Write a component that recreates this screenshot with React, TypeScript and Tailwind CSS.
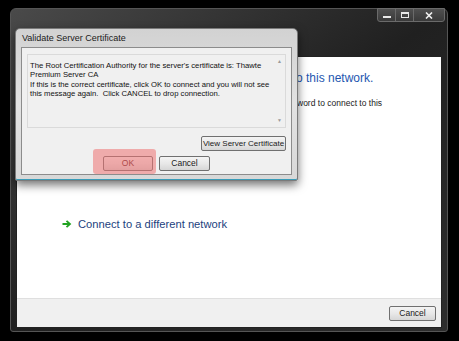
import React from 'react';

const sans = { fontFamily: '"Liberation Sans", "DejaVu Sans", sans-serif' };

function WinButton({ label, className = '' }: { label: string; className?: string }) {
  return (
    <button
      className={`block h-[15px] whitespace-nowrap rounded-[2px] border border-[#707070] bg-gradient-to-b from-[#f4f4f4] via-[#e8e8e8] to-[#d6d6d6] leading-none text-[#1a1a1a] ${className}`}
    >
      {label}
    </button>
  );
}

export default function App() {
  return (
    <div className="relative w-[459px] h-[341px] overflow-hidden bg-black pt-[8px] pl-[10px] pr-[11px] pb-[9px]" style={sans}>
      {/* main wizard window */}
      <div className="relative flex h-full flex-col rounded-t-[6px] rounded-b-[3px] border border-[#555] bg-gradient-to-br from-[#4a4a4a] via-[#202020] to-[#2e2e2e] px-[5px] pt-[47px] pb-[3px]">
        <div className="absolute right-[2px] top-[-1px] flex h-[14px] overflow-hidden rounded-b-[3px] border border-[#6a6a6a] bg-gradient-to-b from-[#505050] to-[#3a3a3a]">
          <div className="flex w-[18px] items-center justify-center border-r border-[#6a6a6a]">
            <div className="mt-[4px] h-[2px] w-[8px] bg-[#e8e8e8]" />
          </div>
          <div className="flex w-[18px] items-center justify-center border-r border-[#6a6a6a]">
            <div className="h-[6px] w-[8px] border border-t-2 border-[#e8e8e8]" />
          </div>
          <div className="flex w-[30px] items-center justify-center">
            <svg width="8" height="7" viewBox="0 0 8 7">
              <path d="M1 0.5 L7 6.5 M7 0.5 L1 6.5" stroke="#f0f0f0" strokeWidth="1.6" />
            </svg>
          </div>
        </div>

        <div className="flex flex-1 flex-col border border-[#222] bg-white">
          <div className="flex-1 pt-[13px]">
            <p className="ml-[279px] whitespace-nowrap text-[12px] leading-[16px] text-[#1e56b0]">o this network.</p>
            <p className="ml-[280px] mt-[11px] whitespace-nowrap text-[8.5px] leading-[12px] text-[#222]">word to connect to this</p>
            <div className="ml-[45px] mt-[107px] flex items-center gap-[6px]">
              <svg width="10" height="8" viewBox="0 0 10 8">
                <path d="M0.5 4 H7.5 M4.5 0.8 L8 4 L4.5 7.2" fill="none" stroke="#21a321" strokeWidth="1.8" />
              </svg>
              <span className="whitespace-nowrap text-[11.2px] leading-[16px] text-[#1d3f7e]">Connect to a different network</span>
            </div>
          </div>
          <div className="flex h-[29px] items-center justify-end border-t border-[#dfdfdf] bg-[#f0f0f0] pr-[5px]">
            <WinButton label="Cancel" className="w-[47px] text-[8.5px]" />
          </div>
        </div>
      </div>

      {/* validate certificate dialog, floating over the window */}
      <div className="absolute left-[15px] top-[28px] flex h-[153px] w-[283px] flex-col rounded-t-[5px] rounded-b-[2px] border border-[#7a7a7a] bg-gradient-to-b from-[#d2d2d2] via-[#e2e2e2] to-[#d8d8d8] px-[5px] pb-[5px] shadow-[0_4px_10px_rgba(0,0,0,0.55),inset_0_-1px_0_#3a9cb8]">
        <div className="flex h-[18px] items-center pl-[1px] pt-[2px] text-[9px] text-[#1a1a1a]">Validate Server Certificate</div>
        <div className="flex flex-1 flex-col border border-[#8c8c8c] bg-[#f0f0f0] px-[5px] pt-[6px]">
          <div className="relative h-[74px] border border-[#dadada] bg-[#f0f0f0] pl-[2px] pt-[6px] pr-[12px] text-[7.7px] leading-[9.3px] text-[#111]">
            <p className="whitespace-nowrap">The Root Certification Authority for the server's certificate is: Thawte</p>
            <p className="whitespace-nowrap">Premium Server CA</p>
            <p className="whitespace-nowrap">If this is the correct certificate, click OK to connect and you will not see</p>
            <p className="whitespace-pre">this message again.  Click CANCEL to drop connection.</p>
            <div className="absolute right-[1px] top-[1px] bottom-[1px] flex w-[9px] flex-col items-center justify-between py-[3px] text-[5px] leading-none text-[#9a9a9a]">
              <span>▲</span>
              <span>▼</span>
            </div>
          </div>
          <div className="mt-[8px] flex justify-end">
            <WinButton label="View Server Certificate" className="w-[85px] text-[8px]" />
          </div>
          <div className="mt-[5px] flex justify-center gap-[6px]">
            <div className="relative flex">
              <WinButton label="OK" className="w-[50px] border-[#8a6e90] text-[8.5px] text-[#5a1010]" />
              <div className="pointer-events-none absolute -left-[10px] -right-[3px] -top-[7px] -bottom-[3px] rounded-[3px] bg-[#ef7272]/55" />
            </div>
            <WinButton label="Cancel" className="w-[51px] text-[8.5px]" />
          </div>
        </div>
      </div>
    </div>
  );
}
